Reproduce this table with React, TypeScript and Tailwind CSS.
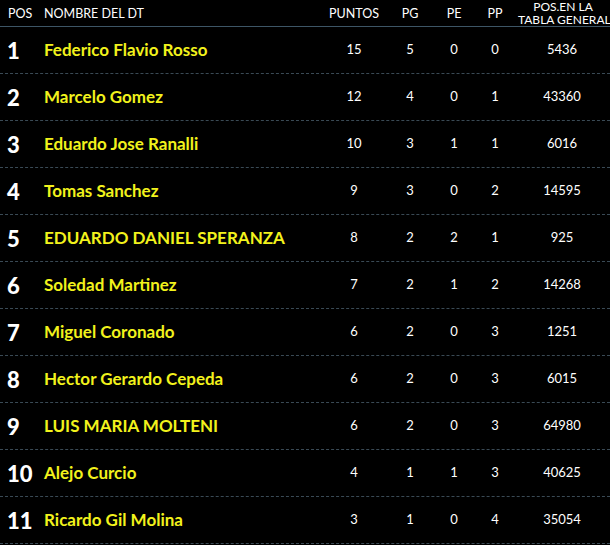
const rows: [string, number, number, number, number, number][] = [
  ['Federico Flavio Rosso', 15, 5, 0, 0, 5436],
  ['Marcelo Gomez', 12, 4, 0, 1, 43360],
  ['Eduardo Jose Ranalli', 10, 3, 1, 1, 6016],
  ['Tomas Sanchez', 9, 3, 0, 2, 14595],
  ['EDUARDO DANIEL SPERANZA', 8, 2, 2, 1, 925],
  ['Soledad Martinez', 7, 2, 1, 2, 14268],
  ['Miguel Coronado', 6, 2, 0, 3, 1251],
  ['Hector Gerardo Cepeda', 6, 2, 0, 3, 6015],
  ['LUIS MARIA MOLTENI', 6, 2, 0, 3, 64980],
  ['Alejo Curcio', 4, 1, 1, 3, 40625],
  ['Ricardo Gil Molina', 3, 1, 0, 4, 35054],
];

export default function App() {
  return (
    <div className="w-[610px] h-[545px] bg-black text-white overflow-hidden font-['Lato','Noto_Sans',sans-serif]">
      <div className="flex items-center h-[27px] border-b border-[#3d5566] text-[12.5px] leading-[13px]">
        <div className="w-[44px] pl-[8px]">POS</div>
        <div className="flex-1">NOMBRE DEL DT</div>
        <div className="w-[60px] text-center">PUNTOS</div>
        <div className="w-[52px] text-center">PG</div>
        <div className="w-[36px] text-center">PE</div>
        <div className="w-[46px] text-center">PP</div>
        <div className="w-[92px] text-center pr-[2px] whitespace-nowrap text-[12px] leading-[12px]">
          <div className="mb-[1px]">POS.EN LA</div>
          <div>TABLA GENERAL</div>
        </div>
      </div>
      {rows.map((r, i) => (
        <div key={i} className="flex items-center h-[47px] border-b border-dashed border-[#3a4a55]">
          <div className="w-[44px] pl-[7px] text-[22px] font-black">{i + 1}</div>
          <div className="flex-1 text-[17px] font-bold text-[#f2f21c]">{r[0]}</div>
          <div className="w-[60px] text-center text-[13px]">{r[1]}</div>
          <div className="w-[52px] text-center text-[13px]">{r[2]}</div>
          <div className="w-[36px] text-center text-[13px]">{r[3]}</div>
          <div className="w-[46px] text-center text-[13px]">{r[4]}</div>
          <div className="w-[92px] text-center text-[13px] pr-[4px]">{r[5]}</div>
        </div>
      ))}
    </div>
  );
}
